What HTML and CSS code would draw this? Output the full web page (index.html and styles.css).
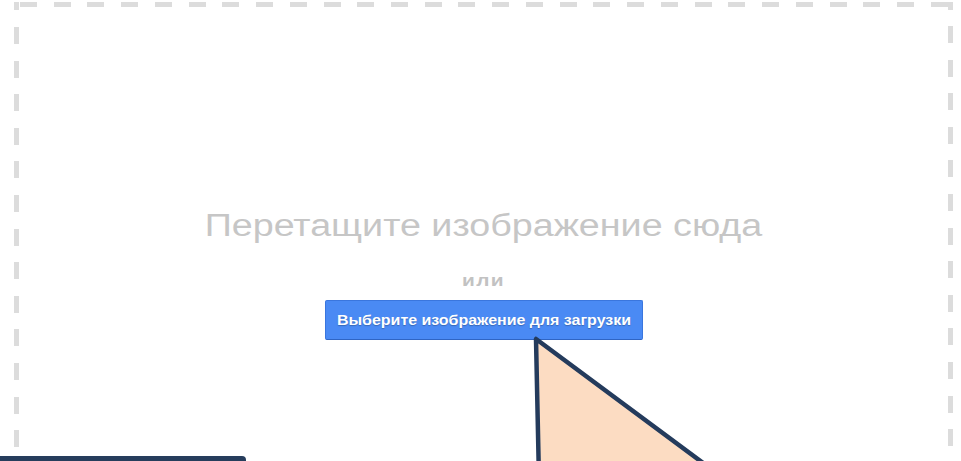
FILE: index.html
```html
<!DOCTYPE html>
<html lang="ru">
<head>
<meta charset="utf-8">
<title>Загрузка изображения</title>
<link rel="stylesheet" href="styles.css">
</head>
<body>
<div class="page">
  <section class="dropzone">
    <h1 class="drop-title">Перетащите изображение сюда</h1>
    <p class="drop-or">или</p>
    <button class="upload-btn" type="button"><span class="upload-label">Выберите изображение для загрузки</span></button>
  </section>

  <!-- callout pointer aimed at the upload button -->
  <svg class="pointer" width="961" height="461" viewBox="0 0 961 461" aria-hidden="true">
    <polygon points="536,339 539,480 726,480" fill="#fcdcc2" stroke="#243b5c" stroke-width="4.5" stroke-linejoin="round"/>
  </svg>

  <div class="note-box"></div>
</div>
</body>
</html>
```

FILE: styles.css
```css
html, body {
  margin: 0;
  padding: 0;
  background: #ffffff;
  overflow: hidden;
}

.page {
  position: relative;
  width: 961px;
  height: 461px;
  overflow: hidden;
  font-family: "Liberation Sans", Arial, sans-serif;
}

/* dashed drop area; the dashes are drawn with gradients to control their length */
.dropzone {
  margin: 2px 0 0 14px;
  width: 939px;
  height: 520px;
  box-sizing: border-box;
  padding-top: 206px;
  display: flex;
  flex-direction: column;
  align-items: center;
  --dash: #dcdcdc;
  background:
    linear-gradient(var(--dash), var(--dash)) 0 0 / 5px 8px no-repeat,
    linear-gradient(var(--dash), var(--dash)) 100% 0 / 5px 8px no-repeat,
    repeating-linear-gradient(90deg, var(--dash) 0 17px, transparent 17px 33.73px) 6px 0 / calc(100% - 6px) 5px no-repeat,
    repeating-linear-gradient(180deg, var(--dash) 0 17px, transparent 17px 33.6px) 0 25px / 5px calc(100% - 25px) no-repeat,
    repeating-linear-gradient(180deg, var(--dash) 0 17px, transparent 17px 33.6px) 100% 24px / 5px calc(100% - 24px) no-repeat;
}

/* the heading face is set wide */
.drop-title {
  margin: 0;
  font-size: 31px;
  line-height: 36px;
  font-weight: normal;
  color: #c6c6c6;
  transform: scaleX(1.215);
}

.drop-or {
  margin: 27px 0 0;
  font-size: 16px;
  line-height: 20px;
  font-weight: bold;
  color: #c2c2c2;
  letter-spacing: 1px;
  transform: scaleX(1.3);
}

.upload-btn {
  margin-top: 9px;
  width: 318px;
  height: 40px;
  padding: 0;
  border: 1px solid #3a76de;
  border-bottom-color: #2f65c4;
  border-radius: 2px;
  background: #4a8af4;
  color: #ffffff;
  font-family: "Liberation Sans", Arial, sans-serif;
  font-size: 14px;
  font-weight: bold;
  text-shadow: 0 1px 1px rgba(0, 0, 0, 0.25);
  cursor: pointer;
}

.upload-label {
  display: inline-block;
  transform: scaleX(1.14);
}

.pointer {
  position: absolute;
  left: 0;
  top: 0;
}

.note-box {
  position: absolute;
  left: -10px;
  top: 456px;
  width: 256px;
  height: 40px;
  background: #263d5c;
  border-radius: 4px;
}
```
